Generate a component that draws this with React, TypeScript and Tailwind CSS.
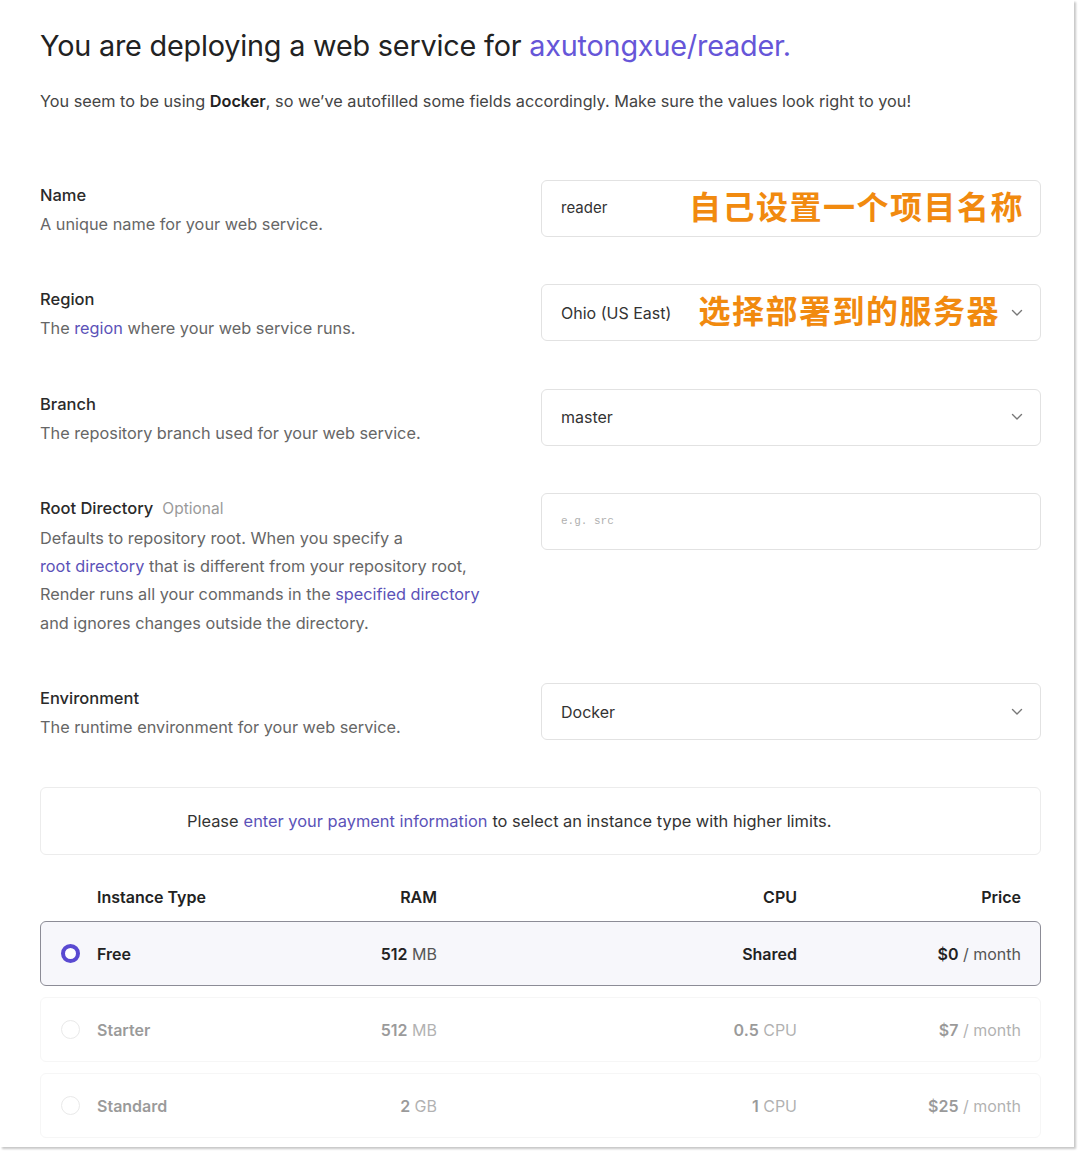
import React from "react";

const font = { fontFamily: "Inter, 'Noto Sans', 'Noto Sans CJK SC', sans-serif" };

function Chevron() {
  return (
    <svg width="12" height="8" viewBox="0 0 12 8" className="shrink-0">
      <polyline points="1.5,1.5 6,6 10.5,1.5" fill="none" stroke="#777" strokeWidth="1.4" strokeLinecap="round" strokeLinejoin="round" />
    </svg>
  );
}

function Row({ label, optional, children, right }: { label: string; optional?: boolean; children: React.ReactNode; right: React.ReactNode }) {
  return (
    <div className="flex items-start">
      <div className="w-[501px] pt-[5px]">
        <div className="text-[16.5px] leading-[20px] font-medium text-[#2a2a2a]">
          {label}
          {optional && <span className="ml-[9px] text-[15.5px] font-normal text-[#9a9a9a]">Optional</span>}
        </div>
        <div className="mt-[5px] text-[16.3px] leading-[28.3px] text-[#666]">{children}</div>
      </div>
      <div className="w-[500px]">{right}</div>
    </div>
  );
}

function Box({ children }: { children: React.ReactNode }) {
  return (
    <div className="h-[57px] rounded-[6px] border border-[#e2e2e2] bg-white pl-[19px] pr-[17px] flex items-center justify-between">
      {children}
    </div>
  );
}

const note = "text-[32px] font-bold text-[#f18a0f] tracking-[1.5px] leading-none mb-[7px]";

function Radio({ on }: { on?: boolean }) {
  return on ? (
    <div className="w-[19px] h-[19px] rounded-full border-[4.5px] border-[#5a4ad1] bg-white" />
  ) : (
    <div className="w-[19px] h-[19px] rounded-full border border-[#cfcfcf] bg-white" />
  );
}

function TRow({ name, ramN, ramU, cpuN, cpuU, price, on }: { name: string; ramN: string; ramU: string; cpuN: string; cpuU?: string; price: string; on?: boolean }) {
  return (
    <div
      className={
        "h-[65px] rounded-[6px] border flex items-center text-[16px] " +
        (on ? "border-[#8c8c96] bg-[#f7f7fb] text-[#222]" : "border-[#ececec] bg-white text-[#222] opacity-45")
      }
    >
      <div className="w-[56px] flex justify-center pl-[2px]">
        <Radio on={on} />
      </div>
      <div className="w-[200px] font-semibold">{name}</div>
      <div className="w-[140px] text-right">
        <span className="font-semibold">{ramN}</span> <span className="text-[#555]">{ramU}</span>
      </div>
      <div className="w-[360px] text-right">
        <span className="font-semibold">{cpuN}</span>
        {cpuU && <span className="text-[#555]"> {cpuU}</span>}
      </div>
      <div className="w-[224px] text-right">
        <span className="font-semibold">{price}</span> <span className="text-[#555]">/ month</span>
      </div>
    </div>
  );
}

export default function App() {
  return (
    <div className="w-[1080px] h-[1151px] bg-white overflow-hidden" style={font}>
      <div className="w-[1074px] h-[1147px] shadow-[2px_2px_2px_rgba(0,0,0,0.22)] bg-white">
        <div className="pl-[40px] pr-[33px] pt-[28px]">
          <h1 className="text-[28.8px] leading-[36px] text-[#222] font-normal tracking-[-0.2px]">
            You are deploying a web service for <span className="text-[#6656d8]">axutongxue/reader.</span>
          </h1>
          <p className="mt-[25px] text-[16.25px] leading-[24px] text-[#444]">
            You seem to be using <span className="font-semibold text-[#222]">Docker</span>, so we’ve autofilled some fields accordingly. Make sure the values look right to you!
          </p>

          <div className="mt-[67px] flex flex-col gap-[46px]">
            <Row label="Name" right={
              <Box>
                <span className="text-[15px] text-[#333]">reader</span>
                <span className={note + " mr-[-1px]"} style={{ fontFamily: "'Noto Sans CJK SC', sans-serif" }}>自己设置一个项目名称</span>
              </Box>
            }>
              A unique name for your web service.
            </Row>
            <Row label="Region" right={
              <Box>
                <span className="text-[16px] text-[#333]">Ohio (US East)</span>
                <span className={note + " ml-auto mr-[11px]"} style={{ fontFamily: "'Noto Sans CJK SC', sans-serif" }}>选择部署到的服务器</span>
                <Chevron />
              </Box>
            }>
              The <span className="text-[#5b52b8]">region</span> where your web service runs.
            </Row>
            <Row label="Branch" right={
              <Box>
                <span className="text-[16px] text-[#333]">master</span>
                <Chevron />
              </Box>
            }>
              The repository branch used for your web service.
            </Row>
            <Row label="Root Directory" optional right={
              <Box>
                <span className="text-[11px] text-[#b0b0b0]" style={{ fontFamily: "'Liberation Mono', monospace" }}>e.g. src</span>
              </Box>
            }>
              Defaults to repository root. When you specify a
              <br />
              <span className="text-[#5b52b8]">root directory</span> that is different from your repository root,
              <br />
              Render runs all your commands in the <span className="text-[#5b52b8]">specified directory</span>
              <br />
              and ignores changes outside the directory.
            </Row>
            <Row label="Environment" right={
              <Box>
                <span className="text-[16px] text-[#333]">Docker</span>
                <Chevron />
              </Box>
            }>
              The runtime environment for your web service.
            </Row>
          </div>

          <div className="mt-[46px] h-[68px] rounded-[6px] border border-[#ececec] flex items-center pl-[146px] text-[16.4px] text-[#333]">
            Please <span className="text-[#5b52b8] mx-[5px]">enter your payment information</span> to select an instance type with higher limits.
          </div>

          <div className="mt-[30px] h-[24px] flex items-center text-[16px] font-semibold text-[#222]">
            <div className="w-[57px]" />
            <div className="w-[200px]">Instance Type</div>
            <div className="w-[140px] text-right">RAM</div>
            <div className="w-[360px] text-right">CPU</div>
            <div className="w-[224px] text-right">Price</div>
          </div>

          <div className="mt-[12px] flex flex-col gap-[11px]">
            <TRow name="Free" ramN="512" ramU="MB" cpuN="Shared" price="$0" on />
            <TRow name="Starter" ramN="512" ramU="MB" cpuN="0.5" cpuU="CPU" price="$7" />
            <TRow name="Standard" ramN="2" ramU="GB" cpuN="1" cpuU="CPU" price="$25" />
          </div>
        </div>
      </div>
    </div>
  );
}
